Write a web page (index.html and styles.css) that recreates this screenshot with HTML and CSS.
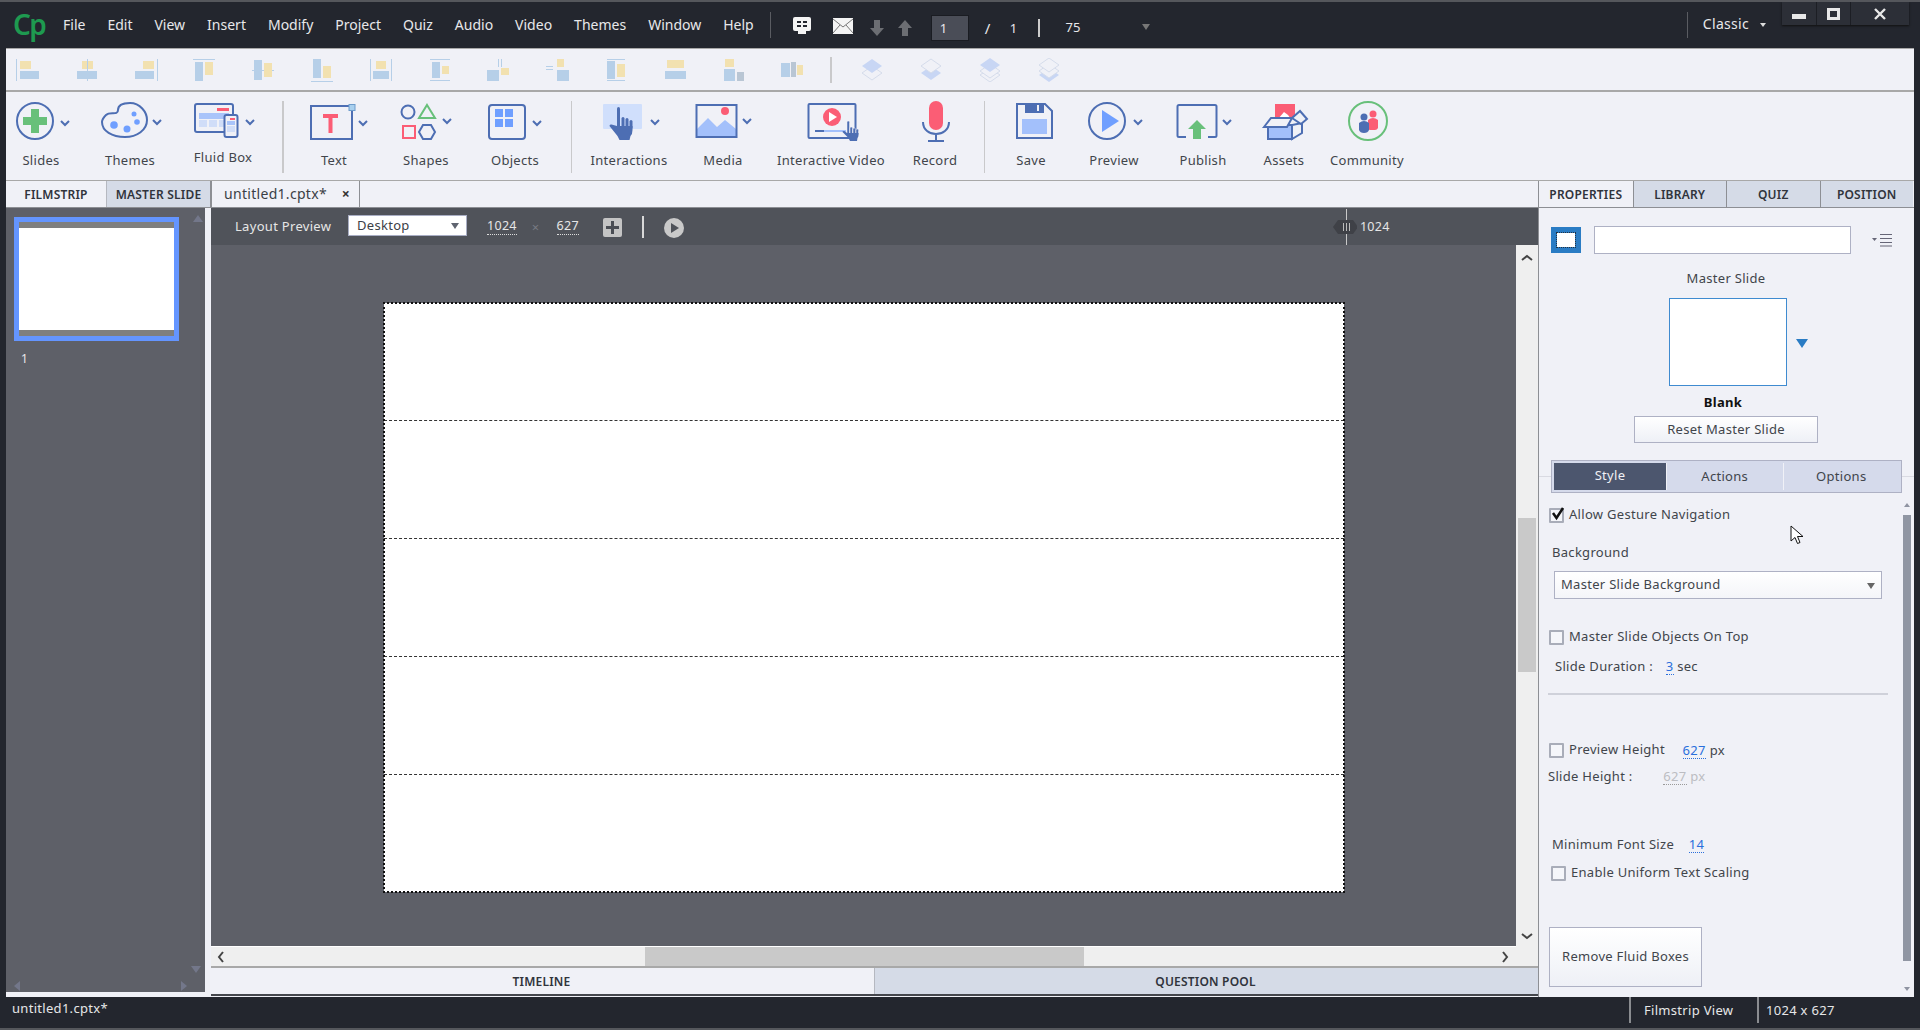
FILE: index.html
```html
<!DOCTYPE html>
<html lang="en">
<head>
<meta charset="utf-8">
<title>Adobe Captivate</title>
<link rel="stylesheet" href="styles.css">
</head>
<body>
<div class="app">
  <header class="titlebar">
    <span class="logo">Cp</span>
    <nav class="menu">
      <span>File</span><span>Edit</span><span>View</span><span>Insert</span><span>Modify</span><span>Project</span><span>Quiz</span><span>Audio</span><span>Video</span><span>Themes</span><span>Window</span><span>Help</span>
    </nav>
    <i class="tb-sep"></i>
    <svg class="tb-ico" width="20" height="20" viewBox="0 0 20 20"><rect x="1" y="1" width="18" height="14" rx="2" fill="#f4f4f4"/><rect x="6" y="15" width="8" height="3" fill="#f4f4f4"/><rect x="5" y="5" width="4" height="2" fill="#23262e"/><rect x="11" y="5" width="4" height="2" fill="#23262e"/><rect x="5" y="9" width="4" height="2" fill="#23262e"/><rect x="11" y="9" width="4" height="2" fill="#23262e"/></svg>
    <svg class="tb-mail" width="20" height="16" viewBox="0 0 20 16"><rect width="20" height="16" fill="#f4f4f4"/><path d="M0 1l10 8 10-8M0 15l7-8M20 15l-7-8" fill="none" stroke="#777" stroke-width="1"/></svg>
    <svg class="tb-arrow" width="14" height="16" viewBox="0 0 14 16"><path d="M4 0h6v8h4l-7 8-7-8h4z" fill="#6c6e73"/></svg>
    <svg class="tb-arrow up" width="14" height="16" viewBox="0 0 14 16"><path d="M4 16h6v-8h4l-7-8-7 8h4z" fill="#6c6e73"/></svg>
    <span class="page-input">1</span>
    <span class="page-slash">/</span>
    <span class="page-total">1</span>
    <i class="page-sep"></i>
    <span class="zoom-val">75</span>
    <i class="tri zoom-tri"></i>
    <i class="tb-sep classic-sep"></i>
    <span class="classic">Classic</span>
    <i class="tri-sm"></i>
    <div class="winbtns">
      <span class="win min"><i></i></span>
      <span class="win max"><i></i></span>
      <span class="win close"><svg width="12" height="12" viewBox="0 0 12 12"><path d="M1 1l10 10M11 1L1 11" stroke="#e8e8e8" stroke-width="2.4"/></svg></span>
    </div>
  </header>

  <div class="aligns">
    <svg class="al" viewBox="0 0 24 24"><path d="M.5 1v22" stroke="#b6cfe8"/><rect x="4" y="3" width="11" height="8" fill="#f2e1b0"/><rect x="4" y="13" width="19" height="8" fill="#b6cfe8"/></svg>
    <svg class="al" viewBox="0 0 24 24"><rect x="7" y="3" width="11" height="8" fill="#f2e1b0"/><rect x="2" y="13" width="20" height="8" fill="#b6cfe8"/><path d="M12.5 1v22" stroke="#b6cfe8"/></svg>
    <svg class="al" viewBox="0 0 24 24"><path d="M23.5 1v22" stroke="#b6cfe8"/><rect x="9" y="3" width="11" height="8" fill="#f2e1b0"/><rect x="1" y="13" width="19" height="8" fill="#b6cfe8"/></svg>
    <svg class="al" viewBox="0 0 24 24"><path d="M1 1.500h22" stroke="#b6cfe8"/><rect x="3" y="4" width="8" height="19" fill="#b6cfe8"/><rect x="13" y="4" width="8" height="13" fill="#f2e1b0"/></svg>
    <svg class="al" viewBox="0 0 24 24"><path d="M1 12.500h22" stroke="#b6cfe8"/><rect x="3" y="2" width="8" height="20" fill="#b6cfe8"/><rect x="13" y="5" width="8" height="14" fill="#f2e1b0"/></svg>
    <svg class="al" viewBox="0 0 24 24"><path d="M1 23.500h22" stroke="#b6cfe8"/><rect x="3" y="1" width="8" height="19" fill="#b6cfe8"/><rect x="13" y="8" width="8" height="12" fill="#f2e1b0"/></svg>
    <svg class="al" viewBox="0 0 24 24"><path d="M1.500 1v22M22.500 1v22" stroke="#b6cfe8"/><rect x="7" y="3" width="10" height="8" fill="#f2e1b0"/><rect x="4" y="13" width="16" height="8" fill="#b6cfe8"/></svg>
    <svg class="al" viewBox="0 0 24 24"><path d="M2 1.500h20M2 22.500h20" stroke="#b6cfe8"/><rect x="4" y="4" width="8" height="16" fill="#b6cfe8"/><rect x="14" y="8" width="7" height="8" fill="#f2e1b0"/></svg>
    <svg class="al" viewBox="0 0 24 24"><path d="M12.500 1v8M15.500 1v8" stroke="#b6cfe8"/><rect x="1" y="12" width="12" height="11" fill="#b6cfe8"/><rect x="15" y="10" width="8" height="7" fill="#f2e1b0"/></svg>
    <svg class="al" viewBox="0 0 24 24"><path d="M1 8.500h7M1 11.500h7" stroke="#b6cfe8"/><rect x="12" y="12" width="12" height="11" fill="#b6cfe8"/><rect x="12" y="1" width="7" height="8" fill="#f2e1b0"/></svg>
    <svg class="al" viewBox="0 0 24 24"><path d="M3 1.500h18M3 22.500h18" stroke="#b6cfe8"/><rect x="3" y="3" width="8" height="18" fill="#b6cfe8"/><rect x="13" y="6" width="8" height="13" fill="#f2e1b0"/></svg>
    <svg class="al" viewBox="0 0 24 24"><rect x="4" y="2" width="17" height="8" fill="#f2e1b0"/><rect x="2" y="13" width="21" height="8" fill="#b6cfe8"/></svg>
    <svg class="al" viewBox="0 0 24 24"><rect x="3" y="1" width="9" height="8" fill="#f2e1b0"/><rect x="2" y="11" width="11" height="12" fill="#b6cfe8"/><rect x="15" y="14" width="7" height="9" fill="#b9c6d4"/></svg>
    <svg class="al" viewBox="0 0 24 24"><rect x="1" y="5" width="9" height="14" fill="#b6cfe8"/><rect x="11" y="4" width="5" height="15" fill="#b9c6d4"/><rect x="17" y="7" width="6" height="10" fill="#f2e1b0"/></svg>
    <i class="al-sep"></i>
    <svg class="ly" viewBox="0 0 24 24"><path d="M12 8L22 15 12 22 2 15z" fill="#f0f1f7" stroke="#d5dceb"/><path d="M12 1L22 8 12 15 2 8z" fill="#c8d6f4"/></svg>
    <svg class="ly" viewBox="0 0 24 24"><path d="M12 8L22 15 12 22 2 15z" fill="#c8d6f4"/><path d="M12 1L22 8 12 15 2 8z" fill="#f0f1f7" stroke="#d5dceb"/></svg>
    <svg class="ly" viewBox="0 0 24 24"><path d="M12 10L22 17 12 24 2 17z" fill="#f0f1f7" stroke="#d5dceb"/><path d="M12 6L22 13 12 20 2 13z" fill="#f0f1f7" stroke="#d5dceb"/><path d="M12 0L22 7 12 14 2 7z" fill="#c8d6f4"/></svg>
    <svg class="ly" viewBox="0 0 24 24"><path d="M12 10L22 17 12 24 2 17z" fill="#c8d6f4"/><path d="M12 6L22 13 12 20 2 13z" fill="#f0f1f7" stroke="#d5dceb"/><path d="M12 0L22 7 12 14 2 7z" fill="#f0f1f7" stroke="#d5dceb"/></svg>
  </div>

  <div class="tools">
    <div class="tool w70"><svg class="tool-ico" viewBox="6 92 70 56"><circle cx="35" cy="121" r="18" fill="none" stroke="#4d6eb3" stroke-width="2"/><path d="M31 109h8v8h8v8h-8v8h-8v-8h-8v-8h8z" fill="#68c07a"/><path class="chev" d="M61 121l4 4 4-4"/></svg><span class="tool-label">Slides</span></div>
    <div class="tool w108"><svg class="tool-ico" viewBox="76 92 108 56"><path d="M106 115C110 111 118 116 118 110 118 104 124 103 130 103 140 103 147 112 147 120 147 130 137 137 125 137 112 137 102 131 102 122 102 119 104 117 106 115Z" fill="none" stroke="#4d6eb3" stroke-width="2"/><circle cx="134" cy="114" r="2.500" fill="#6f9fff"/><circle cx="137" cy="122" r="2.800" fill="#6f9fff"/><circle cx="127" cy="129" r="3.500" fill="#6f9fff"/><circle cx="114" cy="125" r="3.800" fill="#6f9fff"/><path class="chev" d="M153 120l4 4 4-4"/></svg><span class="tool-label">Themes</span></div>
    <div class="tool w78"><svg class="tool-ico" viewBox="184 92 78 56"><rect x="195" y="104" width="38" height="28" rx="2" fill="#f0f1f7" stroke="#4d6eb3" stroke-width="2"/><rect x="217" y="108" width="12" height="3" fill="#fb5d75"/><rect x="199" y="113" width="30" height="6" fill="#a9c4fa"/><path d="M199 120h8v7h-8zM209 120h8v7h-8zM219 120h8v7h-8z" fill="#d0ddf8"/><rect x="224.500" y="115" width="13" height="22" rx="2" fill="#f0f1f7" stroke="#4d6eb3" stroke-width="2"/><rect x="230" y="118" width="5" height="2" fill="#fb5d75"/><rect x="227" y="121" width="8" height="4" fill="#a9c4fa"/><rect x="227" y="126" width="8" height="6" fill="#d0ddf8"/><path class="chev" d="M246 120l4 4 4-4"/></svg><span class="tool-label up">Fluid Box</span></div>
    <i class="tool-sep s1"></i>
    <div class="tool w76"><svg class="tool-ico" viewBox="296 92 76 56"><rect x="311" y="106" width="41" height="33" fill="none" stroke="#4d6eb3" stroke-width="2"/><path d="M323 114h15v4h-5.500v15h-4v-15H323z" fill="#fb5d75"/><rect x="349" y="104.500" width="6" height="6" fill="#a9d0ee" stroke="#6d9ccc"/><path class="chev" d="M359 121l4 4 4-4"/></svg><span class="tool-label">Text</span></div>
    <div class="tool w108"><svg class="tool-ico" viewBox="372 92 108 56"><circle cx="408" cy="112" r="6.500" fill="none" stroke="#4d6eb3" stroke-width="2"/><path d="M427 105l8 13h-16z" fill="none" stroke="#68c07a" stroke-width="2"/><rect x="403" y="126" width="12" height="12" fill="none" stroke="#fb5d75" stroke-width="2"/><path d="M423 125h8l4 7-4 7h-8l-4-7z" fill="none" stroke="#4d6eb3" stroke-width="2"/><path class="chev" d="M443 119l4 4 4-4"/></svg><span class="tool-label">Shapes</span></div>
    <div class="tool w70"><svg class="tool-ico" viewBox="480 92 70 56"><rect x="489" y="105" width="36" height="34" rx="3" fill="none" stroke="#4d6eb3" stroke-width="2"/><path d="M495 109h8v8h-8zM505 109h8v8h-8zM495 119h8v8h-8zM505 119h8v8h-8z" fill="#6f9fff"/><path class="chev" d="M533 121l4 4 4-4"/></svg><span class="tool-label">Objects</span></div>
    <i class="tool-sep s2"></i>
    <div class="tool w114"><svg class="tool-ico" viewBox="572 92 114 56"><rect x="603" y="104" width="39" height="25" rx="1" fill="#d0dffc"/><g fill="#4d6eb3"><rect x="617" y="107" width="3" height="22" rx="1.500"/><rect x="621.500" y="117" width="3" height="12" rx="1.500"/><rect x="625.500" y="118" width="3" height="11" rx="1.500"/><rect x="629.500" y="120" width="3" height="9" rx="1.500"/><path d="M617 126h15.500v4q0 4-2 6l-1 4h-10l-2-4-8-10q0-2 2-1.500z"/></g><path class="chev" d="M651 120l4 4 4-4"/></svg><span class="tool-label">Interactions</span></div>
    <div class="tool w74"><svg class="tool-ico" viewBox="686 92 74 56"><path d="M697 137v-8l11-11 9 9 8-7 11 9v8z" fill="#a3c0fb"/><rect x="696.500" y="105" width="40" height="32" fill="none" stroke="#4d6eb3" stroke-width="2"/><circle cx="725" cy="111" r="4" fill="#fb5d75"/><path class="chev" d="M743 119l4 4 4-4"/></svg><span class="tool-label">Media</span></div>
    <div class="tool w142"><svg class="tool-ico" viewBox="760 92 142 56"><rect x="808.500" y="104" width="47" height="34" rx="1" fill="none" stroke="#4d6eb3" stroke-width="2"/><circle cx="832" cy="117" r="9" fill="#fb5d75"/><path d="M829 112l8 5-8 5z" fill="#fff"/><path d="M815 131h9" stroke="#4d6eb3" stroke-width="2"/><path d="M824 131h22" stroke="#a3c0fb" stroke-width="2"/><g fill="#4d6eb3" stroke="#f0f1f7" stroke-width=".5"><rect x="847" y="121" width="2.500" height="14" rx="1.200"/><rect x="850" y="127" width="2.500" height="8" rx="1.200"/><rect x="853" y="128" width="2.500" height="7" rx="1.200"/><rect x="856" y="129" width="2.500" height="6" rx="1.200"/></g><path d="M847 133h11.500v2q0 2-1 3l-.5 3h-7l-1.500-3-6-6q0-1.500 2-1z" fill="#4d6eb3"/></svg><span class="tool-label">Interactive Video</span></div>
    <div class="tool w66"><svg class="tool-ico" viewBox="902 92 66 56"><rect x="929" y="101" width="14" height="29" rx="7" fill="#fb5d75"/><path d="M923 122c0 16 26 16 26 0M936 134v7M928 141h16" fill="none" stroke="#4d6eb3" stroke-width="2"/></svg><span class="tool-label">Record</span></div>
    <i class="tool-sep s3"></i>
    <div class="tool w92"><svg class="tool-ico" viewBox="985 92 92 56"><path d="M1017 104h28l7 7v27h-35z" fill="none" stroke="#4d6eb3" stroke-width="2"/><path d="M1025 104h19v9h-19z" fill="#4d6eb3"/><rect x="1037" y="105" width="2" height="6" fill="#f0f1f7"/><rect x="1022" y="119" width="25" height="15" fill="#a3c0fb"/></svg><span class="tool-label">Save</span></div>
    <div class="tool w74"><svg class="tool-ico" viewBox="1077 92 74 56"><circle cx="1107" cy="121" r="18" fill="none" stroke="#4d6eb3" stroke-width="2"/><path d="M1102 110l17 11-17 11z" fill="#6f9fff"/><path class="chev" d="M1134 120l4 4 4-4"/></svg><span class="tool-label">Preview</span></div>
    <div class="tool w104"><svg class="tool-ico" viewBox="1151 92 104 56"><path d="M1186 137h-7q-1.500 0-1.500-1.500V106.500q0-1.500 1.500-1.500h36q1.500 0 1.500 1.500v29q0 1.500-1.500 1.500h-7" fill="none" stroke="#4d6eb3" stroke-width="2"/><path d="M1197 120l9 9h-5v10h-8v-10h-5z" fill="#68c07a"/><path class="chev" d="M1223 120l4 4 4-4"/></svg><span class="tool-label">Publish</span></div>
    <div class="tool w58"><svg class="tool-ico" viewBox="1255 92 58 56"><rect x="1275" y="104" width="20" height="15" fill="#fb5d75"/><path d="M1278 119l6-7 4 3 3 4z" fill="#fff"/><rect x="1268" y="125" width="24" height="14" fill="#a3c0fb" stroke="#4d6eb3" stroke-width="2"/><path d="M1292 125v14l10-6v-10z" fill="#f0f1f7" stroke="#4d6eb3" stroke-width="2"/><path d="M1264 127l7-9h21l-5 9z" fill="#f0f1f7" stroke="#4d6eb3" stroke-width="2"/><path d="M1292 118l8-7 7 8-6 5z" fill="#f0f1f7" stroke="#4d6eb3" stroke-width="2"/></svg><span class="tool-label">Assets</span></div>
    <div class="tool w108"><svg class="tool-ico" viewBox="1313 92 108 56"><circle cx="1368" cy="121" r="19" fill="none" stroke="#68c07a" stroke-width="2"/><circle cx="1373" cy="114" r="3.500" fill="#fb5d75"/><path d="M1368 120q5-4 10 0v8q-1 2-3 2h-5q-2 0-2-2z" fill="#fb5d75"/><circle cx="1364" cy="117" r="3.500" fill="#4d6eb3"/><path d="M1359 123q5-4 10 0v7q-1 3-5 3t-5-3z" fill="#4d6eb3"/></svg><span class="tool-label">Community</span></div>
  </div>

  <main class="workspace">
    <section class="film">
      <div class="film-tabs">
        <span class="ftab active">FILMSTRIP</span>
        <span class="ftab">MASTER SLIDE</span>
      </div>
      <div class="film-panel">
        <i class="mini up-mini"></i>
        <div class="thumb"><div class="thumb-page"></div></div>
        <div class="thumb-num">1</div>
        <div class="film-arrows"><i class="mini down-mini"></i><div class="film-h"><i class="mini left-mini"></i><i class="mini right-mini"></i></div></div>
      </div>
    </section>

    <section class="doc">
      <div class="doc-tabs"><span class="doc-tab">untitled1.cptx* <b class="tab-x">×</b></span></div>
      <div class="layout-bar">
        <span class="lp-label">Layout Preview</span>
        <span class="lp-select">Desktop<i class="tri"></i></span>
        <span class="lp-num n1">1024</span>
        <span class="lp-x">×</span>
        <span class="lp-num n2">627</span>
        <span class="lp-plus"><svg width="13" height="13" viewBox="0 0 13 13"><path d="M5 0h3v5h5v3H8v5H5V8H0V5h5z" fill="#4a4d54"/></svg></span>
        <i class="lp-sep"></i>
        <svg class="lp-play" width="20" height="20" viewBox="0 0 20 20"><circle cx="10" cy="10" r="10" fill="#c9c9c9"/><path d="M7 5l8 5-8 5z" fill="#4f5259"/></svg>
        <span class="lp-handle"><svg width="26" height="36" viewBox="0 0 26 36"><path d="M15.500 0v36" stroke="#c9c9c9"/><path d="M7 11h15l5 7-5 7H7l-5-7z" fill="#3f4147"/><path d="M12.500 14v8M15.500 14v8M18.500 14v8" stroke="#bbb"/></svg></span>
        <span class="lp-w">1024</span>
      </div>
      <div class="stage">
        <div class="stage-main">
          <div class="canvas">
            <div class="slide">
              <div class="band"></div><div class="band"></div><div class="band"></div><div class="band"></div><div class="band"></div>
            </div>
          </div>
          <div class="hscroll">
            <svg class="arr" width="8" height="12" viewBox="0 0 8 12"><path d="M6 1L2 6l4 5" fill="none" stroke="#444" stroke-width="2"/></svg>
            <div class="hthumb"></div>
            <svg class="arr" width="8" height="12" viewBox="0 0 8 12"><path d="M2 1l4 5-4 5" fill="none" stroke="#444" stroke-width="2"/></svg>
          </div>
        </div>
        <div class="vscroll">
          <svg width="12" height="8" viewBox="0 0 12 8"><path d="M1 6l5-4 5 4" fill="none" stroke="#444" stroke-width="2"/></svg>
          <div class="vthumb"></div>
          <svg width="12" height="8" viewBox="0 0 12 8"><path d="M1 2l5 4 5-4" fill="none" stroke="#444" stroke-width="2"/></svg>
        </div>
      </div>
      <div class="bottom-tabs">
        <span class="btab active">TIMELINE</span>
        <span class="btab">QUESTION POOL</span>
      </div>
    </section>

    <aside class="props">
      <div class="prop-tabs">
        <span class="ptab active">PROPERTIES</span>
        <span class="ptab">LIBRARY</span>
        <span class="ptab">QUIZ</span>
        <span class="ptab">POSITION</span>
      </div>
      <div class="prop-head">
        <span class="slide-ico"><i></i></span>
        <span class="name-input"></span>
        <svg class="list-ico" width="21" height="14" viewBox="0 0 21 14"><path d="M8 1.500h12M8 5.500h12M8 9.500h12M8 13h12" stroke="#667" stroke-width="1"/><path d="M0 5h5L2.500 8z" fill="#667"/></svg>
      </div>
      <div class="ms-title">Master Slide</div>
      <div class="ms-row"><div class="ms-thumb"></div><i class="ms-tri"></i></div>
      <div class="ms-name">Blank</div>
      <div class="btn reset">Reset Master Slide</div>
      <div class="seg-row">
        <div class="seg"><span class="seg-item on">Style</span><span class="seg-item">Actions</span><span class="seg-item">Options</span></div>
      </div>
      <div class="prop-body">
        <div class="prop-scroll">
          <label class="chk-row r-allow"><i class="chk checked"><svg width="15" height="14" viewBox="0 0 15 14"><path d="M3 6l3.500 5L13 1" fill="none" stroke="#111" stroke-width="2.500"/></svg></i>Allow Gesture Navigation</label>
          <div class="p-text r-bg">Background</div>
          <div class="p-select">Master Slide Background<i class="tri"></i></div>
          <label class="chk-row r-objects"><i class="chk"></i>Master Slide Objects On Top</label>
          <div class="p-text r-dur">Slide Duration : <span class="val v-dur">3</span> sec</div>
          <div class="p-sep"></div>
          <label class="chk-row r-prev"><i class="chk"></i>Preview Height <span class="val v-prev">627</span> <span class="unit">px</span></label>
          <div class="p-text r-sh">Slide Height : <span class="val dis v-sh">627</span> <span class="unit-dis">px</span></div>
          <div class="p-text r-min">Minimum Font Size <span class="val v-min">14</span></div>
          <label class="chk-row r-uni"><i class="chk"></i>Enable Uniform Text Scaling</label>
          <div class="btn remove">Remove Fluid Boxes</div>
        </div>
        <div class="p-scrollbar"><i class="mini up-mini2"></i><div class="p-thumb"></div><i class="mini down-mini2"></i></div>
        <svg class="cursor" width="14" height="20" viewBox="0 0 14 20"><path d="M1 1v15l4-3.500 2.500 6 2.500-1-2.500-6H13z" fill="#fff" stroke="#111" stroke-width="1"/></svg>
      </div>
    </aside>
  </main>

  <footer class="status">
    <span class="st-file">untitled1.cptx*</span>
    <span class="st-item first">Filmstrip View</span>
    <span class="st-item last">1024 x 627</span>
  </footer>
</div>
</body>
</html>
```

FILE: styles.css
```css
* { box-sizing: border-box; }
html, body { margin: 0; padding: 0; height: 100%; overflow: hidden; }
i { display: block; font-style: normal; }
body { font-family: "Noto Sans", "Open Sans", sans-serif; font-size: 13px; color: #41454b; letter-spacing: .3px; }
.app { width: 1920px; height: 1030px; background: #23262e; display: flex; flex-direction: column; border-top: 2px solid #55575c; border-bottom: 2px solid #55575c; overflow: hidden; }

/* title bar */
.titlebar { height: 46px; flex: none; display: flex; align-items: center; padding-left: 13px; color: #e8e8ea; position: relative; }
.logo { width: 50px; font-size: 28px; line-height: 30px; color: #1e9a50; font-weight: 600; letter-spacing: -1.500px; margin-top: -3px; }
.menu { display: flex; gap: 22px; font-size: 14px; letter-spacing: 0; margin-top: -2px; }
.tb-sep { width: 1px; height: 26px; background: #5a5c62; margin-left: 16px; }
.tb-ico { margin-left: 21px; margin-top: 2px; }
.tb-mail { margin-left: 21px; margin-top: 2px; }
.tb-arrow { margin-left: 17px; margin-top: 6px; }
.tb-arrow.up { margin-left: 14px; }
.page-input { width: 38px; height: 26px; margin-left: 19px; margin-top: 6px; background: #4a4d57; border: 1px solid #1a1c22; padding-left: 8px; line-height: 24px; font-size: 13px; }
.page-slash { margin-left: 16px; margin-top: 6px; font-size: 15px; }
.page-total { margin-left: 19px; margin-top: 6px; }
.page-sep { width: 2px; height: 18px; background: #ccc; margin-left: 21px; margin-top: 5px; }
.zoom-val { margin-left: 25px; margin-top: 4px; }
.tri { width: 0; height: 0; border-left: 4px solid transparent; border-right: 4px solid transparent; border-top: 6px solid #777; }
.zoom-tri { margin-left: 61px; margin-top: 4px; }
.classic-sep { margin-left: 537px; }
.classic { margin-left: 15px; font-size: 14px; margin-top: -4px; }
.tri-sm { width: 0; height: 0; border-left: 3px solid transparent; border-right: 3px solid transparent; border-top: 4px solid #ddd; margin-left: 11px; }
.winbtns { display: flex; height: 23px; margin-left: 16px; align-self: flex-start; box-shadow: 0 1px 2px #111; background: #2c2f37; }
.win { display: flex; align-items: center; justify-content: center; height: 23px; border-right: 1px solid #1c1e24; }
.win.min { width: 35px; }
.win.max { width: 34px; }
.win.close { width: 58px; border-right: 0; }
.win.min i { width: 14px; height: 5px; background: #e8e8e8; margin-top: 6px; }
.win.max i { width: 13px; height: 12px; border: 3px solid #e8e8e8; }

/* align bar */
.aligns { height: 44px; flex: none; margin: 0 6px 0 6px; background: #f0f1f7; border-top: 1px solid #a8a8a8; border-bottom: 2px solid #a8a8a8; display: flex; align-items: center; padding-left: 10px; }
.al { width: 24px; height: 24px; margin-right: 34.800px; flex: none; }
.ly { width: 24px; height: 24px; margin-right: 35px; flex: none; }
.al-sep { width: 2px; height: 26px; background: #c9c9cb; margin-right: 28px; margin-left: -9px; }

/* tools */
.tools { height: 89px; flex: none; margin: 0 6px; background: #f0f1f7; border-bottom: 1px solid #a8a8a8; display: flex; }
.tool { height: 88px; display: flex; flex-direction: column; align-items: center; flex: none; }
.tool-ico { width: 100%; height: 56px; flex: none; display: block; overflow: visible; }
.tool-label { font-size: 13px; line-height: 18px; margin-top: 3px; color: #41454b; white-space: nowrap; }
.tool-label.up { margin-top: 0; }
.chev { fill: none; stroke: #4d6eb3; stroke-width: 2; }
.w58 { width: 58px; } .w66 { width: 66px; } .w70 { width: 70px; } .w74 { width: 74px; } .w76 { width: 76px; }
.w78 { width: 78px; } .w92 { width: 92px; } .w104 { width: 104px; } .w108 { width: 108px; } .w114 { width: 114px; } .w142 { width: 142px; }
.tool-sep { width: 2px; height: 72px; background: #c9c9cb; margin-top: 9px; flex: none; }
.s1 { margin-left: 20px; margin-right: 12px; }
.s2 { margin-left: 21px; width: 1px; }
.s3 { margin-left: 16px; width: 1px; }

/* workspace */
.workspace { height: 816px; flex: none; display: flex; margin-left: 6px; margin-right: 6px; background: #f0f1f7; }
.film { width: 205px; flex: none; }
.film-tabs { height: 27px; display: flex; border-bottom: 1px solid #8d8f94; }
.ftab { font-size: 12px; font-weight: 600; color: #30343c; display: flex; align-items: center; justify-content: center; letter-spacing: .2px; }
.ftab.active { width: 100px; }
.ftab:not(.active) { width: 105px; background: #d5dbe7; border-left: 1px solid #b5b8c0; border-right: 1px solid #8d8f94; white-space: nowrap; }
.film-panel { width: 199px; height: 784px; background: #5e6068; padding: 9px 0 0 8px; position: relative; display: flex; flex-direction: column; }
.thumb { width: 165px; height: 124px; border: 5px solid #6495ff; background: #7f7f7f; padding: 6px 0; flex: none; }
.thumb-page { height: 100%; background: #fff; }
.thumb-num { color: #e8e8e8; font-size: 12px; margin: 10px 0 0 7px; line-height: 16px; }
.mini { width: 0; height: 0; }
.up-mini { position: absolute; top: 7px; left: 187px; border-left: 5px solid transparent; border-right: 5px solid transparent; border-bottom: 7px solid #73778a; }
.film-arrows { margin-top: auto; margin-bottom: 1px; margin-right: 3px; display: flex; flex-direction: column; align-items: flex-end; gap: 8px; }
.down-mini { border-left: 5px solid transparent; border-right: 5px solid transparent; border-top: 7px solid #73778a; margin-right: 1px; }
.film-h { display: flex; justify-content: space-between; width: 173px; margin-right: 15px; }
.left-mini { border-top: 5px solid transparent; border-bottom: 5px solid transparent; border-right: 6px solid #73778a; }
.right-mini { border-top: 5px solid transparent; border-bottom: 5px solid transparent; border-left: 6px solid #73778a; }

.doc { width: 1327px; flex: none; display: flex; flex-direction: column; }
.doc-tabs { height: 27px; flex: none; border-bottom: 1px solid #8d8f94; }
.doc-tab { display: flex; width: 149px; height: 26px; align-items: center; padding: 0 0 2px 12px; border-left: 1px solid #8d8f94; border-right: 1px solid #8d8f94; font-size: 14px; color: #3b3f46; white-space: pre; }
.tab-x { font-size: 14px; margin-left: 11px; color: #333; }
.layout-bar { height: 37px; flex: none; background: #50535a; display: flex; align-items: center; color: #e6e6e6; font-size: 13px; padding-left: 24px; }
.lp-label { width: 113px; margin-top: -2px; white-space: nowrap; }
.lp-select { width: 119px; height: 21px; background: #fff; border: 1px solid #a9aec4; color: #3c4046; font-size: 13px; padding: 0 7px 2px 8px; display: flex; align-items: center; justify-content: space-between; margin-top: -2px; }
.lp-select .tri { border-top-color: #5f6470; margin-top: 2px; }
.lp-num { border-bottom: 1px dotted #ddd; line-height: 16px; font-size: 12.500px; }
.n1 { margin-left: 20px; }
.lp-x { margin-left: 15px; color: #777a82; }
.n2 { margin-left: 17px; }
.lp-plus { width: 19px; height: 19px; margin: 2px 0 0 24px; background: #c4c4c4; border-radius: 2px; display: flex; align-items: center; justify-content: center; }
.lp-sep { width: 2px; height: 22px; background: #d8d8d8; margin-left: 20px; }
.lp-play { margin: 2px 0 0 20px; }
.lp-handle { margin-left: 647px; height: 36px; }
.lp-w { margin-left: 3px; font-size: 12.500px; }
.stage { height: 723px; flex: none; display: flex; }
.stage-main { width: 1305px; flex: none; display: flex; flex-direction: column; }
.canvas { height: 701px; flex: none; background: #5e6068; padding: 58px 0 0 173px; }
.slide { width: 960px; height: 589px; background: #fff; outline: 2px dotted #111; outline-offset: -1px; display: flex; flex-direction: column; }
.band { flex: 1; border-bottom: 1px dashed #333; }
.band:last-child { border-bottom: 0; }
.hscroll { height: 22px; flex: none; background: #efefef; border-top: 1px solid #fff; display: flex; align-items: center; padding: 0 7px 0 6px; border-bottom: 2px solid #a8a8a8; }
.hthumb { width: 439px; height: 19px; background: #c9c9c9; margin-left: 420px; margin-right: auto; }
.vscroll { width: 22px; flex: none; background: #efefef; display: flex; flex-direction: column; align-items: center; padding-top: 9px; border-bottom: 2px solid #a8a8a8; }
.vthumb { width: 18px; height: 154px; background: #c9c9c9; margin-top: 256px; margin-bottom: auto; }
.vscroll svg:last-child { margin-bottom: 26px; }
.bottom-tabs { height: 28px; flex: none; display: flex; border-bottom: 2px solid #45474d; }
.btab { flex: 1; display: flex; align-items: center; justify-content: center; font-size: 12px; font-weight: 600; color: #30343c; letter-spacing: .2px; padding-right: 2px; }
.btab:not(.active) { background: #d5dbe7; border-left: 1px solid #b5b8c0; }

/* properties */
.props { width: 376px; flex: none; border-left: 1px solid #8d8f94; display: flex; flex-direction: column; }
.prop-tabs { height: 27px; flex: none; display: flex; border-bottom: 1px solid #8d8f94; }
.ptab { width: 93.500px; display: flex; align-items: center; justify-content: center; font-size: 12px; font-weight: 600; color: #30343c; background: #d5dbe7; border-left: 1px solid #8d8f94; letter-spacing: .2px; }
.ptab.active { background: #f0f1f7; border-left: 0; }
.prop-head { height: 28px; margin-top: 18px; padding-left: 12px; display: flex; align-items: center; flex: none; }
.slide-ico { width: 30px; height: 26px; background: #2a7cc4; display: flex; align-items: center; justify-content: center; }
.slide-ico i { width: 18px; height: 14px; background: #fff; outline: 1px dotted #234; }
.name-input { width: 257px; height: 28px; background: #fff; border: 1px solid #aeb1c4; margin-left: 13px; }
.list-ico { margin-left: 21px; }
.ms-title { margin-top: 15px; line-height: 18px; font-size: 13px; text-align: center; width: 376px; padding-right: 2px; flex: none; }
.ms-row { display: flex; margin: 11px 0 0 130px; height: 88px; align-items: center; flex: none; }
.ms-thumb { width: 118px; height: 88px; background: #fff; border: 1px solid #3f8bd0; }
.ms-tri { width: 0; height: 0; border-left: 6px solid transparent; border-right: 6px solid transparent; border-top: 9px solid #2a7cc4; margin-left: 9px; margin-top: 3px; }
.ms-name { margin-top: 7px; line-height: 18px; font-weight: 700; font-size: 13px; color: #111; width: 368px; text-align: center; flex: none; }
.btn { background: linear-gradient(#fff, #eef0f6); border: 1px solid #aeb1c4; display: flex; align-items: center; justify-content: center; font-size: 13px; color: #41454b; flex: none; padding-bottom: 2px; }
.reset { width: 184px; height: 27px; margin: 5px 0 0 95px; }
.seg-row { height: 33px; margin-top: 17px; padding-left: 12px; background: linear-gradient(#d9dae2, #d9dae2) center / 100% 1px no-repeat; flex: none; }
.seg { width: 351px; height: 33px; background: #d5daeb; border: 1px solid #aeb1c4; padding: 2px; display: flex; }
.seg-item { flex: 1; display: flex; align-items: center; justify-content: center; font-size: 13px; border-left: 1px solid #f0f1f7; padding-bottom: 2px; }
.seg-item:first-child { border-left: 0; }
.seg-item.on { flex: none; width: 112px; background: #4c566e; color: #f0f0f4; padding-bottom: 4px; }
.prop-body { flex: 1; display: flex; position: relative; min-height: 0; }
.prop-scroll { width: 364px; flex: none; display: flex; flex-direction: column; align-items: flex-start; }
.chk-row { display: flex; align-items: center; height: 15px; font-size: 13px; white-space: pre; padding-bottom: 3px; }
.chk { width: 15px; height: 15px; border: 2px solid #a9adb9; border-radius: 1px; background: #f5f6fa; margin-right: 5px; flex: none; position: relative; top: 1px; }
.chk svg { position: absolute; left: -1px; top: -3px; }
.p-text { line-height: 18px; font-size: 13px; white-space: pre; }
.val { color: #2a6fdc; border-bottom: 1px dotted #2a6fdc; line-height: 15px; display: inline-block; }
.val.dis { color: #bcbdc2; border-bottom-color: #9a9a9a; }
.unit-dis { color: #bcbdc2; }
.unit { margin-left: 4px; position: relative; top: 1px; }
.r-allow { margin: 15px 0 0 10px; }
.r-bg { margin: 20px 0 0 13px; }
.p-select { width: 328px; height: 28px; margin: 10px 0 0 15px; background: linear-gradient(#fff, #f4f5f9); border: 1px solid #aeb1c4; display: flex; align-items: center; justify-content: space-between; padding: 0 6px 2px 6px; font-size: 13px; flex: none; }
.p-select .tri { border-top-color: #666; margin-top: 3px; }
.r-objects { margin: 31px 0 0 10px; }
.r-dur { margin: 12px 0 0 16px; }
.v-dur { margin-left: 9px; }
.p-sep { width: 340px; height: 2px; margin: 18px 0 0 9px; background: #cfd1da; flex: none; }
.r-prev { margin: 48px 0 0 10px; }
.v-prev { margin-left: 14px; position: relative; top: 2px; }
.r-sh { margin: 9px 0 0 9px; }
.v-sh { margin-left: 27px; }
.r-min { margin: 50px 0 0 13px; }
.v-min { margin-left: 11px; }
.r-uni { margin: 13px 0 0 12px; }
.remove { width: 153px; height: 60px; margin: 46px 0 0 10px; }
.p-scrollbar { width: 8px; margin-left: 0; display: flex; flex-direction: column; align-items: center; padding-top: 10px; }
.up-mini2 { border-left: 3px solid transparent; border-right: 3px solid transparent; border-bottom: 4px solid #8f94a2; }
.down-mini2 { border-left: 3px solid transparent; border-right: 3px solid transparent; border-top: 4px solid #8f94a2; margin-top: 26px; }
.p-thumb { width: 8px; height: 446px; background: #9096a3; margin-top: 8px; }
.cursor { position: absolute; left: 251px; top: 32px; }

/* status */
.status { flex: 1; display: flex; align-items: flex-start; color: #e6e6e8; font-size: 13px; padding-left: 12px; }
.st-file { margin-top: 2px; }
.st-item { height: 26px; border-left: 2px solid #8a8c90; display: flex; align-items: center; }
.first { margin-left: auto; width: 128px; padding-left: 13px; }
.last { width: 163px; padding-left: 7px; }
```
